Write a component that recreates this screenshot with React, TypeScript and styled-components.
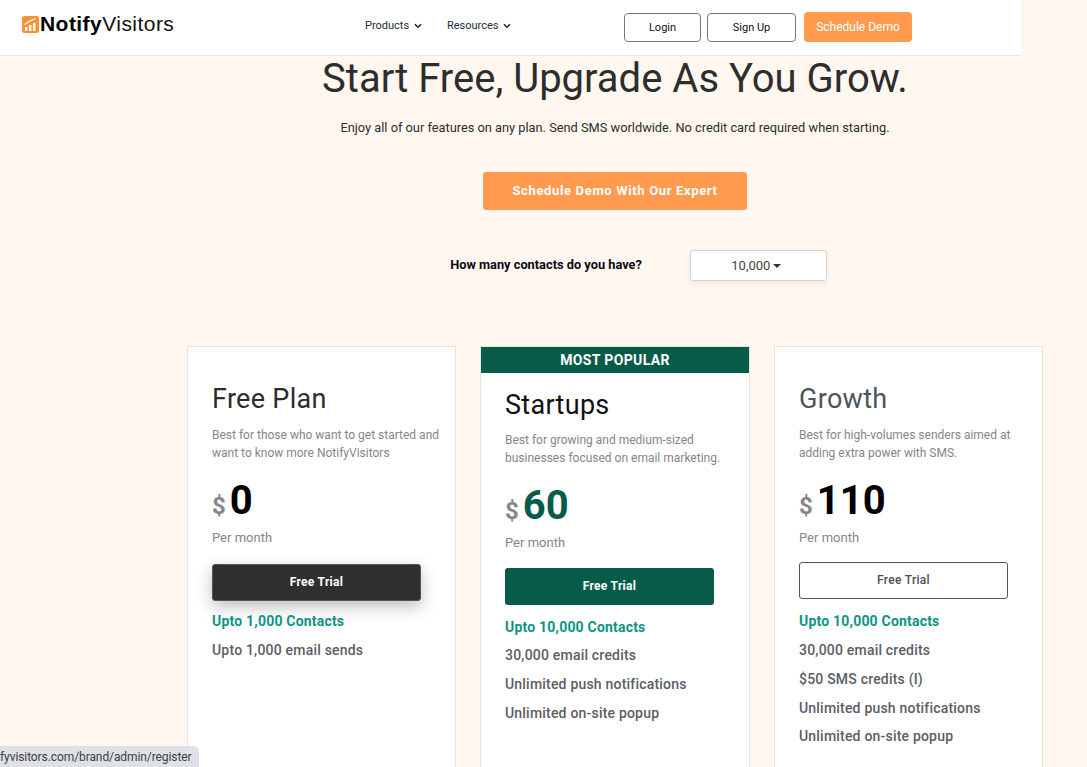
import styled, { createGlobalStyle } from 'styled-components';

const GlobalStyle = createGlobalStyle`
  html, body {
    margin: 0;
    height: 100%;
    overflow: hidden;
    background: #fff7f0;
  }
  * {
    box-sizing: border-box;
  }
  body {
    font-family: Roboto, "Liberation Sans", sans-serif;
  }
`;

interface Plan {
  name: string;
  blurb: string[];
  price: string;
  contacts: string;
  perks: string[];
  variant: 'dark' | 'popular' | 'outline';
}

const plans: Plan[] = [
  {
    name: 'Free Plan',
    blurb: ['Best for those who want to get started and', 'want to know more NotifyVisitors'],
    price: '0',
    contacts: 'Upto 1,000 Contacts',
    perks: ['Upto 1,000 email sends'],
    variant: 'dark',
  },
  {
    name: 'Startups',
    blurb: ['Best for growing and medium-sized', 'businesses focused on email marketing.'],
    price: '60',
    contacts: 'Upto 10,000 Contacts',
    perks: ['30,000 email credits', 'Unlimited push notifications', 'Unlimited on-site popup'],
    variant: 'popular',
  },
  {
    name: 'Growth',
    blurb: ['Best for high-volumes senders aimed at', 'adding extra power with SMS.'],
    price: '110',
    contacts: 'Upto 10,000 Contacts',
    perks: ['30,000 email credits', '$50 SMS credits (I)', 'Unlimited push notifications', 'Unlimited on-site popup'],
    variant: 'outline',
  },
];

const Chevron = () => (
  <svg width="8" height="6" viewBox="0 0 8 6" fill="none">
    <path d="M1 1.2 4 4.2 7 1.2" stroke="#222" strokeWidth="1.6" />
  </svg>
);

const LogoMark = () => (
  <svg width="17" height="17" viewBox="0 0 17 17">
    <rect width="17" height="17" rx="2.5" fill="#f7923a" />
    <rect x="3" y="11" width="2.4" height="4" fill="#fff" />
    <rect x="7" y="9" width="2.4" height="6" fill="#fff" />
    <rect x="11" y="7" width="2.4" height="8" fill="#fff" />
    <path d="M2.5 8.5 8 5l5.5-2.5" stroke="#fff" strokeWidth="1.2" fill="none" />
  </svg>
);

const App = () => (
  <>
    <GlobalStyle />
    <Page>
      <Header>
        <Logo>
          <LogoMark />
          <LogoWord>
            <b>Notify</b>Visitors
          </LogoWord>
        </Logo>
        <Nav>
          <NavLink>
            Products <Chevron />
          </NavLink>
          <NavLink>
            Resources <Chevron />
          </NavLink>
        </Nav>
        <Actions>
          <GhostButton $width={77}>Login</GhostButton>
          <GhostButton $width={89}>Sign Up</GhostButton>
          <DemoButton>Schedule Demo</DemoButton>
        </Actions>
      </Header>
      <Main>
        <Title>Start Free, Upgrade As You Grow.</Title>
        <Lead>Enjoy all of our features on any plan. Send SMS worldwide. No credit card required when starting.</Lead>
        <ExpertButton>Schedule Demo With Our Expert</ExpertButton>
        <ContactRow>
          <ContactLabel>How many contacts do you have?</ContactLabel>
          <ContactSelect>
            10,000 <Caret />
          </ContactSelect>
        </ContactRow>
        <Cards>
          {plans.map((plan) => {
            const popular = plan.variant === 'popular';
            return (
              <Card key={plan.name}>
                {popular && <Banner>MOST POPULAR</Banner>}
                <CardBody $popular={popular}>
                  <PlanName $variant={plan.variant}>{plan.name}</PlanName>
                  <Blurb>
                    {plan.blurb.map((line) => (
                      <span key={line}>{line}</span>
                    ))}
                  </Blurb>
                  <PriceRow>
                    <Currency>$</Currency>
                    <Amount $popular={popular}>{plan.price}</Amount>
                  </PriceRow>
                  <Period>Per month</Period>
                  <TrialButton $variant={plan.variant}>Free Trial</TrialButton>
                  <Contacts>{plan.contacts}</Contacts>
                  <Perks $popular={popular}>
                    {plan.perks.map((perk) => (
                      <li key={perk}>{perk}</li>
                    ))}
                  </Perks>
                </CardBody>
              </Card>
            );
          })}
        </Cards>
      </Main>
      <StatusBar>fyvisitors.com/brand/admin/register</StatusBar>
    </Page>
  </>
);

export default App;

const Page = styled.div`
  height: 767px;
  overflow: hidden;
  background: #fff7f0;
`;

const Header = styled.header`
  width: 1021px;
  height: 56px;
  display: flex;
  align-items: flex-start;
  background: #fff;
  border-bottom: 1px solid #e6e6e6;
  padding-left: 22px;
`;

const Logo = styled.div`
  display: flex;
  align-items: center;
  width: 343px;
  height: 20px;
  margin-top: 14px;
`;

const LogoWord = styled.span`
  margin-left: 1px;
  font-family: "Liberation Sans", Arial, sans-serif;
  font-size: 21px;
  letter-spacing: 0.45px;
  color: #111;

  b {
    font-weight: 700;
    color: #000;
  }
`;

const Nav = styled.nav`
  display: flex;
  gap: 25px;
  width: 259px;
  margin-top: 19px;
`;

const NavLink = styled.span`
  font-size: 11px;
  line-height: 14px;
  color: #222c3a;
  white-space: nowrap;

  svg {
    margin-left: 2px;
  }
`;

const Actions = styled.div`
  display: flex;
  align-items: center;
  gap: 6px;
  margin-top: 12px;
`;

const GhostButton = styled.button<{ $width: number }>`
  width: ${({ $width }) => $width}px;
  height: 29px;
  margin-top: 1px;
  background: #fff;
  border: 1px solid #777;
  border-radius: 4px;
  font: 400 11px Roboto, sans-serif;
  color: #111;
  padding: 0;
`;

const DemoButton = styled.button`
  width: 108px;
  height: 30px;
  margin-left: 2px;
  background: #ff9a4f;
  border: 0;
  border-radius: 4px;
  font: 400 12px Roboto, sans-serif;
  color: #fff;
  padding: 0;
`;

const Main = styled.main`
  width: 856px;
  margin-left: 187px;
  display: flex;
  flex-direction: column;
  align-items: center;
`;

const Title = styled.h1`
  margin: 0;
  font-size: 40px;
  line-height: 46px;
  font-weight: 400;
  color: #2d2d2d;
  white-space: nowrap;
`;

const Lead = styled.p`
  margin: 16px 0 0;
  font-size: 12.8px;
  line-height: 20px;
  color: #2d2d2d;
`;

const ExpertButton = styled.button`
  width: 264px;
  height: 38px;
  margin-top: 34px;
  padding: 0 0 2px;
  background: #ff9a4f;
  border: 0;
  border-radius: 3px;
  font: 700 13px Roboto, sans-serif;
  letter-spacing: 0.65px;
  color: #fff;
`;

const ContactRow = styled.div`
  display: flex;
  align-items: center;
  gap: 48px;
  margin-top: 40px;
  margin-left: 47px;
`;

const ContactLabel = styled.span`
  margin-bottom: 2px;
  font-size: 12.8px;
  font-weight: 700;
  color: #0a0a14;
`;

const ContactSelect = styled.div`
  width: 137px;
  height: 31px;
  display: flex;
  align-items: center;
  justify-content: center;
  gap: 3px;
  padding-right: 4px;
  background: #fff;
  border: 1px solid #d5d5d5;
  border-radius: 3px;
  box-shadow: 0 2px 6px rgba(0, 0, 0, 0.08);
  font-size: 13px;
  color: #444;
`;

const Caret = styled.i`
  width: 0;
  height: 0;
  border-left: 4px solid transparent;
  border-right: 4px solid transparent;
  border-top: 4px solid #333;
`;

const Cards = styled.div`
  align-self: stretch;
  display: grid;
  grid-template-columns: 269px 270px 269px;
  gap: 24px;
  margin-top: 65px;
`;

const Card = styled.section`
  height: 440px;
  background: #fff;
  border: 1px solid #e8e4e0;
`;

const Banner = styled.div`
  height: 26px;
  background: #065c49;
  color: #fff;
  font-size: 14px;
  font-weight: 700;
  line-height: 26px;
  text-align: center;
  letter-spacing: 0.35px;
`;

const CardBody = styled.div<{ $popular: boolean }>`
  padding: ${({ $popular }) => ($popular ? '15px' : '35px')} 24px 0;
`;

const nameColors: Record<Plan['variant'], string> = {
  dark: '#2d2d2d',
  popular: '#111',
  outline: '#4d5560',
};

const PlanName = styled.h2<{ $variant: Plan['variant'] }>`
  margin: 0 0 ${({ $variant }) => ($variant === 'popular' ? 9 : 10)}px;
  font-size: 27px;
  line-height: 34px;
  font-weight: 400;
  letter-spacing: 0.3px;
  color: ${({ $variant }) => nameColors[$variant]};
`;

const Blurb = styled.p`
  margin: 0;
  font-size: 12px;
  line-height: 18px;
  color: #85858a;
  white-space: nowrap;

  span {
    display: block;
  }
`;

const PriceRow = styled.div`
  display: flex;
  align-items: flex-end;
  gap: 4px;
  margin-top: 14px;
  height: 50px;
`;

const Currency = styled.span`
  font-size: 24px;
  font-weight: 700;
  line-height: 40px;
  color: #85858a;
`;

const Amount = styled.span<{ $popular: boolean }>`
  font-size: 40px;
  font-weight: 700;
  line-height: 50px;
  color: ${({ $popular }) => ($popular ? '#065c49' : '#000')};
`;

const Period = styled.div`
  margin-top: 3px;
  font-size: 13px;
  line-height: 18px;
  color: #85858a;
`;

const trialMargins: Record<Plan['variant'], string> = {
  dark: '17px 0 -2px',
  popular: '16px 0 0',
  outline: '15px 0 0',
};

const TrialButton = styled.button<{ $variant: Plan['variant'] }>`
  display: block;
  width: 209px;
  height: 37px;
  padding: 0 0 2px;
  margin: ${({ $variant }) => trialMargins[$variant]};
  border-radius: 3px;
  font: ${({ $variant }) => ($variant === 'outline' ? 500 : 700)} 12px Roboto, sans-serif;
  letter-spacing: 0.3px;
  background: ${({ $variant }) =>
    $variant === 'dark' ? '#2f2f2f' : $variant === 'popular' ? '#065c49' : '#fff'};
  color: ${({ $variant }) => ($variant === 'outline' ? '#4a5058' : '#fff')};
  border: ${({ $variant }) =>
    $variant === 'outline' ? '1px solid #555' : $variant === 'dark' ? '1px solid #555' : '0'};
  box-shadow: ${({ $variant }) => ($variant === 'dark' ? '0 6px 16px rgba(0, 0, 0, 0.25)' : 'none')};
`;

const Contacts = styled.div`
  margin-top: 13px;
  font-size: 14px;
  font-weight: 700;
  line-height: 18px;
  letter-spacing: 0.2px;
  color: #0e9384;
`;

const Perks = styled.ul<{ $popular: boolean }>`
  list-style: none;
  margin: 0;
  padding: ${({ $popular }) => ($popular ? 0 : 1)}px 0 0;

  li {
    margin-top: 11px;
    font-size: 14px;
    font-weight: 500;
    line-height: 17.8px;
    letter-spacing: 0.2px;
    color: #5b5d66;
  }
`;

const StatusBar = styled.div`
  position: fixed;
  left: 0;
  bottom: 0;
  width: 199px;
  height: 21px;
  padding-top: 3px;
  background: #dee1e6;
  border-top-right-radius: 6px;
  font-size: 12px;
  line-height: 16px;
  letter-spacing: -0.09px;
  color: #3c4043;
  white-space: nowrap;
  overflow: hidden;
`;
